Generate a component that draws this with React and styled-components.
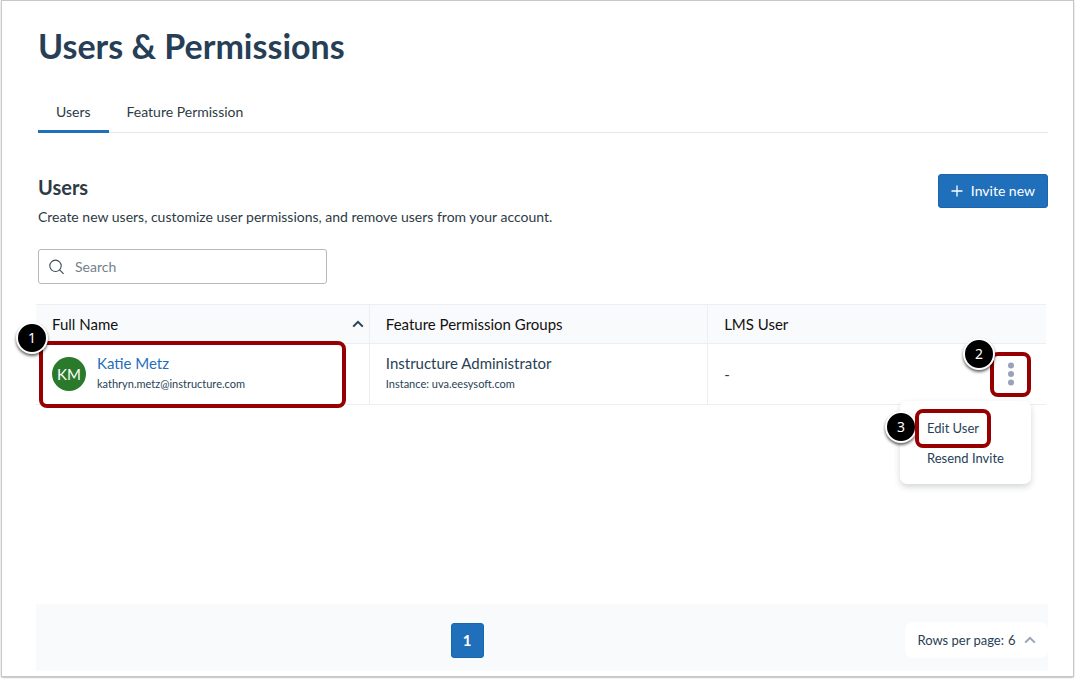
import React from 'react';
import styled, { createGlobalStyle, ThemeProvider } from 'styled-components';

const theme = {
	colors: {
		text: '#2d3b45',
		heading: '#273f56',
		blue: '#1f6fbb',
		green: '#2b7a2c',
		mark: '#960000',
		line: '#ebeef4',
		panel: '#f9fafc',
		muted: '#97a3b8',
	},
	font: {
		main: "Lato, 'Liberation Sans', sans-serif",
		badge: "'Noto Sans', 'Open Sans', sans-serif",
	},
};

const GlobalStyle = createGlobalStyle`
	*, *::before, *::after {
		box-sizing: border-box;
	}
	body {
		margin: 0;
		background: #fff;
	}
	button, input, select {
		font: inherit;
		color: inherit;
	}
`;

const Page = styled.div`
	display: flex;
	min-height: 100vh;
	padding: 1px 2px 3px;
	color: ${p => p.theme.colors.text};
	font-family: ${p => p.theme.font.main};
	font-size: 14px;
	line-height: 20px;
`;

const Frame = styled.main`
	flex: 1;
	display: flex;
	flex-direction: column;
	padding: 22px 25px 5px 34px;
	background: #fff;
	box-shadow: 0 0 1px 1px #c8c8c8, 0 1px 2px #666;
`;

const Title = styled.h1`
	margin: 0 2px 27px;
	color: ${p => p.theme.colors.heading};
	font-size: 34px;
	font-weight: 700;
	line-height: 46px;
`;

const Tabs = styled.nav`
	display: flex;
	margin-left: 2px;
	border-bottom: 1px solid #e3e8ec;
`;

const Tab = styled.a`
	height: 37px;
	margin-bottom: -1px;
	padding: 6px 18px 0;
	border-bottom: 3px solid ${p => (p.$active ? p.theme.colors.blue : 'transparent')};
	color: ${p => p.theme.colors.text};
	text-decoration: none;
`;

const Intro = styled.section`
	display: flex;
	justify-content: space-between;
	align-items: flex-start;
	margin: 41px 0 22px 2px;
`;

const SectionTitle = styled.h2`
	margin: 0 0 7px;
	font-size: 20px;
	font-weight: 700;
	line-height: 26px;
`;

const Description = styled.p`
	margin: 0;
`;

const InviteButton = styled.button`
	display: flex;
	align-items: center;
	gap: 8px;
	height: 34px;
	padding: 0 12px;
	border: 1px solid #1a65ad;
	border-radius: 3px;
	background: ${p => p.theme.colors.blue};
	color: #fff;
`;

const SearchBox = styled.label`
	display: flex;
	align-items: center;
	gap: 10px;
	width: 289px;
	height: 35px;
	margin: 0 0 20px 2px;
	padding: 0 10px;
	border: 1px solid #b3b9be;
	border-radius: 3px;
`;

const SearchInput = styled.input`
	flex: 1;
	min-width: 0;
	padding: 0;
	border: none;
	outline: none;
	background: transparent;

	&::placeholder {
		color: #75808a;
		opacity: 1;
	}
`;

const UserTable = styled.table`
	width: calc(100% - 2px);
	border-collapse: collapse;
	table-layout: fixed;
	color: ${p => p.theme.colors.heading};
`;

const HeadCell = styled.th`
	height: 39px;
	padding: 0 15px 0 16px;
	border: solid ${p => p.theme.colors.line};
	border-width: 1px 0 1px ${p => (p.$first ? '0' : '1px')};
	background: ${p => p.theme.colors.panel};
	color: #111;
	font-size: 15px;
	font-weight: 400;
	text-align: left;

	&:first-child {
		width: 33%;
	}
`;

const SortButton = styled.button`
	display: flex;
	justify-content: space-between;
	align-items: center;
	width: calc(100% + 10px);
	padding: 0;
	border: none;
	background: none;
`;

const Cell = styled.td`
	position: relative;
	height: 61px;
	padding: 0 15px 0 16px;
	border: solid ${p => p.theme.colors.line};
	border-width: 0 0 1px ${p => (p.$first ? '0' : '1px')};
	font-size: 15px;
`;

const Person = styled.div`
	display: flex;
	align-items: center;
	gap: 11px;
`;

const Avatar = styled.span`
	display: grid;
	place-items: center;
	width: 34px;
	height: 34px;
	border-radius: 50%;
	background: ${p => p.theme.colors.green};
	color: #fff;
`;

const NameLink = styled.a`
	display: block;
	color: ${p => p.theme.colors.blue};
	text-decoration: none;
`;

const GroupName = styled.span`
	display: block;
`;

const Small = styled.span`
	display: block;
	font-size: 11px;
	line-height: 22px;
`;

const LmsRow = styled.div`
	display: flex;
	justify-content: space-between;
	align-items: center;
`;

const MoreButton = styled.button`
	position: relative;
	display: grid;
	place-items: center;
	width: 41px;
	height: 45px;
	padding: 0;
	border: none;
	background: none;
`;

const Menu = styled.div`
	position: absolute;
	z-index: 1;
	top: 57px;
	right: 15px;
	display: flex;
	flex-direction: column;
	align-items: flex-start;
	width: 131px;
	height: 83px;
	padding: 12px 15px;
	border-radius: 7px;
	background: #fff;
	box-shadow: 0 3px 6px rgba(40, 50, 60, 0.2);
`;

const MenuItem = styled.button`
	position: relative;
	height: 30px;
	padding: 0 12px;
	border: none;
	background: none;
	font-size: 13px;
	flex-shrink: 0;
`;

const Ring = styled.span`
	position: absolute;
	z-index: 2;
	inset: ${p => p.$inset};
	border: 4px solid ${p => p.theme.colors.mark};
	border-radius: 8px;
	pointer-events: none;
`;

const Badge = styled.span`
	position: absolute;
	z-index: ${p => (p.$behind ? 1 : 3)};
	top: ${p => p.$top};
	left: ${p => p.$left};
	display: grid;
	place-items: center;
	width: 32px;
	height: 32px;
	border: 2px solid #fff;
	border-radius: 50%;
	background: #000;
	box-shadow: 0 2px 3px rgba(0, 0, 0, 0.6);
	color: #fff;
	font-family: ${p => p.theme.font.badge};
	font-size: 14px;
	line-height: 20px;
`;

const Pager = styled.footer`
	display: grid;
	grid-template-columns: 1fr auto 1fr;
	align-items: center;
	height: 67px;
	margin-top: auto;
	padding-top: 5px;
	background: ${p => p.theme.colors.panel};
`;

const PageButton = styled.button`
	grid-column: 2;
	width: 33px;
	height: 35px;
	margin-right: 150px;
	padding: 0;
	border: 1px solid #1a65ad;
	border-radius: 3px;
	background: ${p => p.theme.colors.blue};
	color: #fff;
	font-size: 15px;
	font-weight: 700;
`;

const RowsPerPage = styled.label`
	justify-self: end;
	display: flex;
	align-items: center;
	gap: 4px;
	height: 36px;
	padding: 0 12px;
	border-radius: 8px;
	background: #fff;
	color: ${p => p.theme.colors.heading};
	font-size: 13px;
`;

const RowsSelect = styled.select`
	appearance: none;
	padding: 0 4px 0 0;
	border: none;
	background: none;
`;

const Chevron = ({ color }) => (
	<svg width="12" height="8" viewBox="0 0 12 8" aria-hidden="true">
		<path d="M1.2 6.6 6 1.8l4.8 4.8" fill="none" stroke={color} strokeWidth="2" />
	</svg>
);

const SearchIcon = () => (
	<svg width="16" height="16" viewBox="0 0 16 16" fill="none" stroke="#3f4c56" strokeWidth="1.1" aria-hidden="true">
		<circle cx="6.5" cy="6.8" r="5.7" />
		<path d="m10.6 10.9 4 4" />
	</svg>
);

const PlusIcon = () => (
	<svg width="12" height="12" viewBox="0 0 12 12" stroke="#fff" strokeWidth="1.3" aria-hidden="true">
		<path d="M6 .5v11M.5 6h11" />
	</svg>
);

const DotsIcon = () => (
	<svg width="6" height="24" viewBox="0 0 6 24" fill={theme.colors.muted} aria-hidden="true">
		<circle cx="3" cy="3.5" r="3" />
		<circle cx="3" cy="12" r="3" />
		<circle cx="3" cy="20.5" r="3" />
	</svg>
);

const Users = () => (
	<UserTable>
		<thead>
			<tr>
				<HeadCell $first aria-sort="ascending">
					<SortButton>
						Full Name
						<Chevron color="#273f56" />
					</SortButton>
				</HeadCell>
				<HeadCell>Feature Permission Groups</HeadCell>
				<HeadCell>LMS User</HeadCell>
			</tr>
		</thead>
		<tbody>
			<tr>
				<Cell $first>
					<Person>
						<Avatar>KM</Avatar>
						<div>
							<NameLink href="#katie-metz">Katie Metz</NameLink>
							<Small>kathryn.metz@instructure.com</Small>
						</div>
					</Person>
					<Ring $inset="-3px 23px -4px 3px" />
					<Badge $top="-22px" $left="-20px">1</Badge>
				</Cell>
				<Cell>
					<GroupName>Instructure Administrator</GroupName>
					<Small>Instance: uva.eesysoft.com</Small>
				</Cell>
				<Cell>
					<LmsRow>
						<span>-</span>
						<MoreButton aria-label="More options" aria-expanded="true">
							<DotsIcon />
							<Ring $inset="0" />
							<Badge $top="-14px" $left="-27px">2</Badge>
						</MoreButton>
					</LmsRow>
					<Menu>
						<MenuItem>
							Edit User
							<Ring $inset="-4px 0 -5px 0" />
							<Badge $behind $top="-2px" $left="-30px">3</Badge>
						</MenuItem>
						<MenuItem>Resend Invite</MenuItem>
					</Menu>
				</Cell>
			</tr>
		</tbody>
	</UserTable>
);

const App = () => (
	<ThemeProvider theme={theme}>
		<GlobalStyle />
		<Page>
			<Frame>
				<Title>Users &amp; Permissions</Title>
				<Tabs>
					<Tab href="#users" $active aria-current="page">Users</Tab>
					<Tab href="#feature-permission">Feature Permission</Tab>
				</Tabs>
				<Intro>
					<div>
						<SectionTitle>Users</SectionTitle>
						<Description>
							Create new users, customize user permissions, and remove users from your account.
						</Description>
					</div>
					<InviteButton>
						<PlusIcon />
						Invite new
					</InviteButton>
				</Intro>
				<SearchBox>
					<SearchIcon />
					<SearchInput type="search" placeholder="Search" aria-label="Search" />
				</SearchBox>
				<Users />
				<Pager>
					<PageButton aria-current="page">1</PageButton>
					<RowsPerPage>
						Rows per page:
						<RowsSelect defaultValue="6">
							<option>6</option>
						</RowsSelect>
						<Chevron color={theme.colors.muted} />
					</RowsPerPage>
				</Pager>
			</Frame>
		</Page>
	</ThemeProvider>
);

export default App;
